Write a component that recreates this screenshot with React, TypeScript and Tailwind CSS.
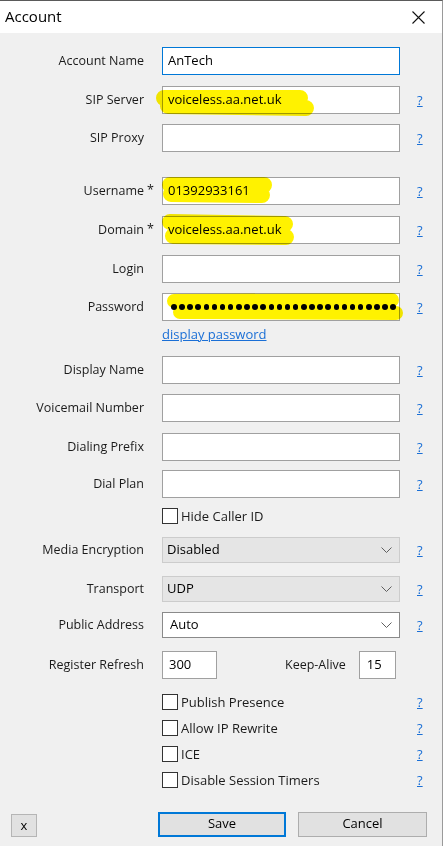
import React from 'react';

const font = { fontFamily: '"Open Sans", "Noto Sans", sans-serif' };

function Help() {
  return <span className="ml-[17px] text-[13px] text-[#1a6fd6] underline leading-none">?</span>;
}

function Label({ text, star }: { text: string; star?: boolean }) {
  return (
    <div className="relative w-[144px] shrink-0 text-right text-[12.5px] text-[#1b1b1b]">
      {text}
      {star && <span className="absolute left-[147px] top-[-1px]">*</span>}
    </div>
  );
}

function TextRow({ label, value, star, mt, focused, help = true }: { label: string; value?: string; star?: boolean; mt: string; focused?: boolean; help?: boolean }) {
  return (
    <div className={`flex items-center ${mt}`}>
      <Label text={label} star={star} />
      <div
        className={`ml-[18px] flex h-[28px] w-[238px] items-center border bg-white px-[5px] text-[13px] text-black ${
          focused ? 'border-[#0078d7]' : 'border-[#a0a0a0]'
        }`}
      >
        {value}
      </div>
      {help && <Help />}
    </div>
  );
}

function Chevron() {
  return (
    <svg width="11" height="7" viewBox="0 0 11 7" className="ml-auto mr-[3px]">
      <path d="M0.5 0.5 L5.5 5.5 L10.5 0.5" fill="none" stroke="#5f5f5f" strokeWidth="1" />
    </svg>
  );
}

function ComboRow({ label, value, mt, disabled }: { label: string; value: string; mt: string; disabled?: boolean }) {
  return (
    <div className={`flex items-center ${mt}`}>
      <Label text={label} />
      <div
        className={`ml-[18px] flex h-[26px] w-[238px] items-center border px-[4px] text-[13px] text-black ${
          disabled ? 'border-[#cccccc] bg-[#e5e5e5]' : 'border-[#8a8a8a] bg-white'
        }`}
      >
        <span className={disabled ? '' : 'pl-[3px]'}>{value}</span>
        <Chevron />
      </div>
      <Help />
    </div>
  );
}

function CheckRow({ label, mt, help = true }: { label: string; mt: string; help?: boolean }) {
  return (
    <div className={`flex items-center ${mt}`}>
      <div className="ml-[162px] h-[16px] w-[16px] shrink-0 border border-[#333333] bg-white" />
      <span className="ml-[3px] w-[219px] text-[13px] text-[#1b1b1b] leading-none">{label}</span>
      {help && <Help />}
    </div>
  );
}

const dots = Array.from({ length: 28 });

export default function App() {
  return (
    <div className="relative h-[846px] w-[445px] bg-white" style={font}>
      <div className="flex h-[846px] w-[443px] flex-col border-r border-t border-r-[#9a9a9a] border-t-[#5a5a5a]">
        {/* title bar */}
        <div className="flex h-[32px] shrink-0 items-center bg-white">
          <span className="ml-[5px] -mt-[1px] text-[15px] text-black">Account</span>
          <svg width="13" height="13" viewBox="0 0 13 13" className="ml-auto mr-[17px]">
            <path d="M0.5 0.5 L12.5 12.5 M12.5 0.5 L0.5 12.5" stroke="#111" strokeWidth="1.1" />
          </svg>
        </div>

        <div className="flex flex-1 flex-col bg-[#f0f0f0]">
          <TextRow label="Account Name" value="AnTech" mt="mt-[14px]" focused help={false} />
          <TextRow label="SIP Server" value="voiceless.aa.net.uk" mt="mt-[11px]" />
          <TextRow label="SIP Proxy" mt="mt-[10px]" />
          <TextRow label="Username" star value="01392933161" mt="mt-[25px]" />
          <TextRow label="Domain" star value="voiceless.aa.net.uk" mt="mt-[11px]" />
          <TextRow label="Login" mt="mt-[11px]" />
          <div className="mt-[10px] flex items-center">
            <Label text="Password" />
            <div className="ml-[18px] flex h-[28px] w-[238px] items-center justify-between border border-[#a0a0a0] bg-white pl-[8px] pr-[3px]">
              {dots.map((_, i) => (
                <span key={i} className="h-[5.5px] w-[5.5px] rounded-full bg-black" />
              ))}
            </div>
            <Help />
          </div>
          <div className="ml-[162px] mt-[3px] text-[13px] text-[#1a6fd6] underline leading-[20px]">display password</div>

          <TextRow label="Display Name" mt="mt-[12px]" />
          <TextRow label="Voicemail Number" mt="mt-[10px]" />
          <TextRow label="Dialing Prefix" mt="mt-[11px]" />
          <TextRow label="Dial Plan" mt="mt-[9px]" />
          <CheckRow label="Hide Caller ID" mt="mt-[10px]" help={false} />

          <ComboRow label="Media Encryption" value="Disabled" mt="mt-[13px]" disabled />
          <ComboRow label="Transport" value="UDP" mt="mt-[13px]" disabled />
          <ComboRow label="Public Address" value="Auto" mt="mt-[10px]" />

          <div className="mt-[13px] flex items-center">
            <Label text="Register Refresh" />
            <div className="ml-[18px] flex h-[28px] w-[55px] items-center border border-[#a0a0a0] bg-white px-[6px] text-[13px]">300</div>
            <span className="ml-[68px] text-[12.5px] text-[#1b1b1b]">Keep-Alive</span>
            <div className="ml-[13px] flex h-[28px] w-[37px] items-center border border-[#a0a0a0] bg-white px-[7px] text-[13px]">15</div>
          </div>

          <CheckRow label="Publish Presence" mt="mt-[15px]" />
          <CheckRow label="Allow IP Rewrite" mt="mt-[10px]" />
          <CheckRow label="ICE" mt="mt-[10px]" />
          <CheckRow label="Disable Session Timers" mt="mt-[10px]" />

          <div className="mt-[23px] flex items-center">
            <button className="ml-[11px] mt-[3px] h-[23px] w-[26px] border border-[#b5b5b5] bg-[#e1e1e1] text-[13px] leading-none text-black">x</button>
            <button className="ml-[121px] h-[25px] w-[128px] border-2 border-[#0078d7] bg-[#e1e1e1] text-[13px] text-black">Save</button>
            <button className="ml-[12px] h-[25px] w-[129px] border border-[#adadad] bg-[#e1e1e1] text-[13px] text-black">Cancel</button>
          </div>
        </div>
      </div>

      {/* highlighter marks */}
      <svg className="pointer-events-none absolute left-0 top-0 mix-blend-multiply" width="445" height="846">
        <g fill="none" stroke="#fff200" strokeLinecap="round" strokeLinejoin="round">
          <path d="M164 98 L300 98 M168 106 L306 108" strokeWidth="16" />
          <path d="M170 185 L264 185 M171 194 L262 195" strokeWidth="16" />
          <path d="M170 222 L285 224 M173 236 L286 237" strokeWidth="16" />
          <path d="M174 301 L392 300 M180 312 L396 313" strokeWidth="14" />
        </g>
      </svg>
    </div>
  );
}
